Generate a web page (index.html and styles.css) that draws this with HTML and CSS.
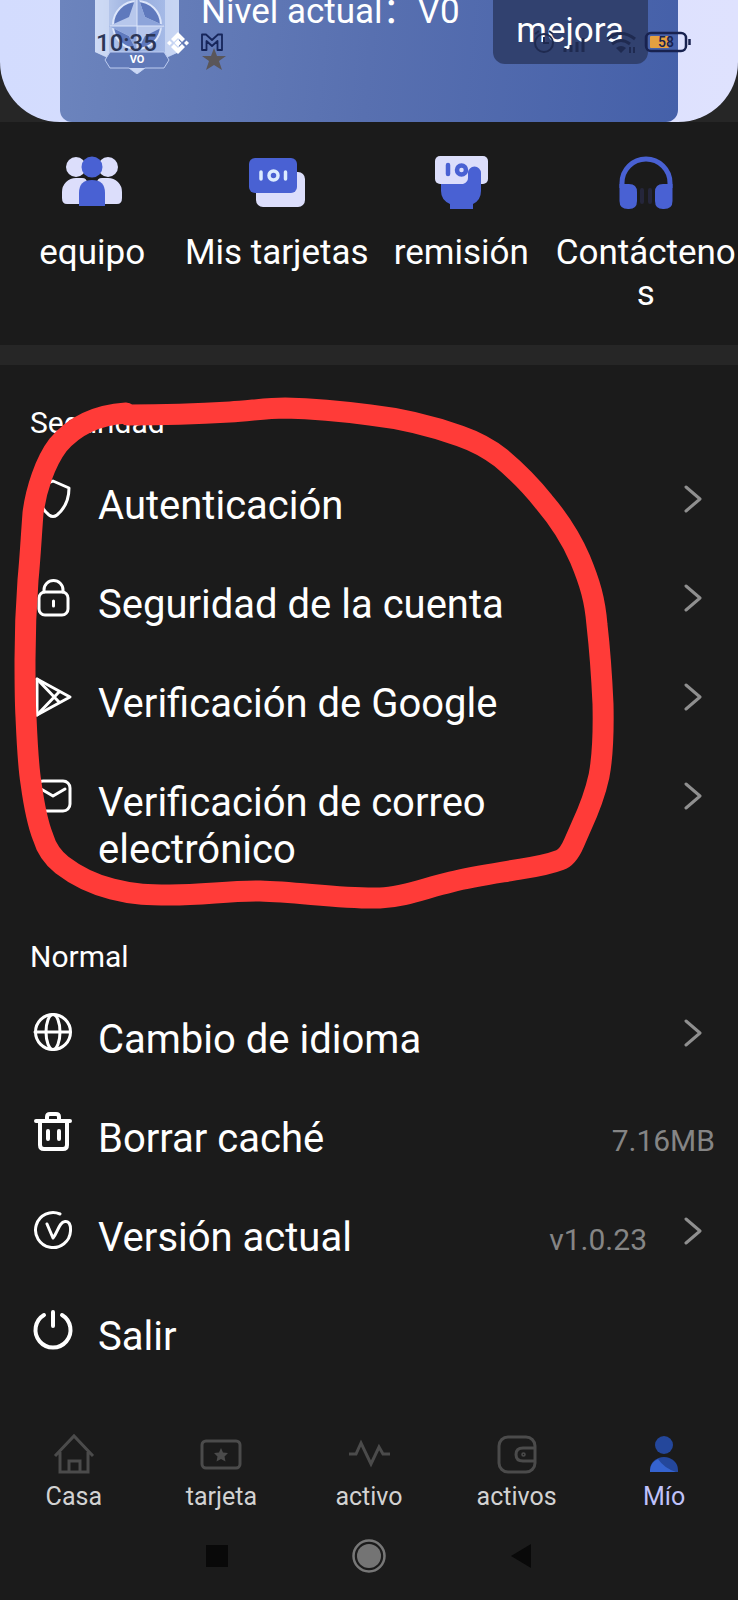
FILE: index.html
```html
<!DOCTYPE html>
<html lang="es">
<head>
<meta charset="utf-8">
<meta name="viewport" content="width=device-width, initial-scale=1">
<title>Mío</title>
<link rel="stylesheet" href="styles.css">
</head>
<body>
<div class="statusbar">
  <span class="clock">10:35</span>
  <svg class="status-left" viewBox="0 0 58 44" aria-hidden="true">
    <g fill="#fff">
      <path d="M11 6l7 7-3 3-4-4-4 4-3-3z"/>
      <path d="M11 28l7-7-3-3-4 4-4-4-3 3z"/>
      <path d="M11 13.500l3.500 3.500-3.500 3.500-3.500-3.500z"/>
      <path d="M2.500 14.500l2.500 2.500-2.500 2.500-2.500-2.500z"/>
      <path d="M19.500 14.500l2.500 2.500-2.500 2.500-2.500-2.500z"/>
    </g>
    <path d="M35 24V8.500h4l6 5.500 6-5.500h4V24h-4.500V15l-5.500 5-5.500-5v9z" fill="none" stroke="#16255a" stroke-width="1.800" stroke-linejoin="round"/>
    <path d="M47 22l3 8h9l-7 5 3 9-8-5-8 5 3-9-7-5h9z" fill="#5a5659"/>
  </svg>
  <svg class="status-right" viewBox="0 0 160 30" aria-hidden="true">
    <g fill="none" stroke="#1f2a50" stroke-width="2">
      <circle cx="13" cy="17" r="9"/>
      <path d="M13 11v6h5M4 8l4-3M22 8l-4-3"/>
      <path d="M34 26v-4M40 26v-7M46 26v-10M52 26V12" stroke-width="3"/>
      <path d="M76 13q14-11 28 0M81 18q9-7 18 0" stroke-width="3"/>
      <path d="M99 21v6M103 21v6"/>
    </g>
    <path d="M85 22q5-4 10 0l-5 5z" fill="#1f2a50"/>
    <rect x="115" y="7" width="40" height="18" rx="5" fill="none" stroke="#18224f" stroke-width="2.500"/>
    <rect x="119" y="10" width="19" height="12" rx="1" fill="#e5a040"/>
    <path d="M158.500 13v6" stroke="#18224f" stroke-width="2.500"/>
    <text x="135" y="21" text-anchor="middle" class="battery-text">58</text>
  </svg>
</div>

<header class="hero">
  <div class="level-card">
    <svg class="badge" viewBox="0 0 86 86" aria-hidden="true">
      <defs>
        <linearGradient id="hex" x1="0" x2="1"><stop offset="0" stop-color="#c3d2f1"/><stop offset=".5" stop-color="#96acdc"/><stop offset="1" stop-color="#adc1ec"/></linearGradient>
      </defs>
      <path d="M0 8l42-16 42 16v56l-42 20-42-20z" fill="url(#hex)"/>
      <path d="M14 8L0 12v52l14 6zM70 8l14 4v52l-14 6z" fill="#d3def6" opacity=".7"/>
      <circle cx="42" cy="37" r="24" fill="#5f79bd" stroke="#dde6fa" stroke-width="2"/>
      <path d="M42 6l8 23 20 9-20 10-8 16-8-16-20-10 20-9z" fill="#b7c7ec"/>
      <path d="M42 6v32h28l-20-9zM42 38v26l-8-16-20-10z" fill="#8da4da"/>
      <path d="M15 38h54M42 10v50" stroke="#dce5fa" stroke-width="1"/>
      <path d="M15 64h54l5 8-5 8H50l-8 6-8-6H15l-5-8z" fill="#6079b8" stroke="#bdccf0" stroke-width="1"/>
      <path d="M34 80h16l-8 6z" fill="#cbd8f5"/>
      <text x="42" y="75" text-anchor="middle" class="badge-text">VO</text>
    </svg>
    <p class="level">Nivel actual：V0</p>
    <button class="upgrade" type="button">mejora</button>
  </div>
</header>

<nav class="shortcuts">
  <a href="#equipo">
    <svg viewBox="0 0 60 54" aria-hidden="true">
      <g fill="#dcdefb"><circle cx="14" cy="11" r="10"/><circle cx="46" cy="11" r="10"/>
      <path d="M0 42V36a14 14 0 0 1 14-14h6q5 0 5 5v21H5q-5 0-5-6zM60 42V36a14 14 0 0 0-14-14h-6q-5 0-5 5v21h20q5 0 5-6z"/></g>
      <circle cx="30" cy="11" r="10.500" fill="#4961d3"/>
      <path d="M17 50V37q0-13 13-13t13 13v13z" fill="#4961d3"/>
    </svg>
    <span>equipo</span>
  </a>
  <a href="#tarjetas">
    <svg viewBox="0 0 60 54" aria-hidden="true">
      <rect x="9" y="16" width="49" height="35" rx="7" fill="#dcdefb"/>
      <rect x="2" y="2" width="48" height="35" rx="6" fill="#4961d3"/>
      <path d="M14 16v7M38.500 16v7" stroke="#dcecff" stroke-width="3.500" stroke-linecap="round"/>
      <circle cx="26.500" cy="19.500" r="4.500" fill="none" stroke="#dcecff" stroke-width="3.500"/>
    </svg>
    <span>Mis tarjetas</span>
  </a>
  <a href="#remision">
    <svg viewBox="0 0 60 54" aria-hidden="true">
      <rect x="4" y="0" width="53" height="28" rx="5" fill="#dcdefb"/>
      <path d="M17 9v9" stroke="#4961d3" stroke-width="4.500" stroke-linecap="round"/>
      <circle cx="30.500" cy="14" r="4.500" fill="none" stroke="#4961d3" stroke-width="4.500"/>
      <path d="M10 28h22q5-2 5-6v-5a6.500 6.500 0 0 1 13 0v18q0 9-8 13v5H19v-5q-9-4-9-13z" fill="#4961d3"/>
    </svg>
    <span>remisión</span>
  </a>
  <a href="#contacto">
    <svg viewBox="0 0 60 54" aria-hidden="true">
      <path d="M6 32v-5a24 24 0 0 1 48 0v5" fill="none" stroke="#4961d3" stroke-width="5"/>
      <path d="M3.500 28H13q8 0 8 8v9q0 8-8 8h-1q-8.500 0-8.500-8zM56.500 28H47q-8 0-8 8v9q0 8 8 8h1q8.500 0 8.500-8z" fill="#4961d3"/>
      <path d="M26 34v12M34 34v12" stroke="#25263b" stroke-width="4" stroke-linecap="round"/>
    </svg>
    <span>Contáctenos</span>
  </a>
</nav>

<main class="settings">
  <section>
    <h2>Seguridad</h2>
    <ul>
      <li><a class="row" href="#autenticacion">
        <svg class="icon" viewBox="0 0 42 42" aria-hidden="true"><path d="M21 3L37 10q0 17-12 27-4 3-8 0Q5 27 5 10z"/></svg>
        <span class="label">Autenticación</span>
        <svg class="chevron" viewBox="0 0 18 42" aria-hidden="true"><path d="M2 9l14 12L2 33"/></svg>
      </a></li>
      <li><a class="row" href="#cuenta">
        <svg class="icon" viewBox="0 0 42 42" aria-hidden="true"><rect x="7" y="15" width="29" height="23" rx="6"/><path d="M12 15v-2a9.500 9.500 0 0 1 19 0v2"/><path d="M21.500 24v5"/></svg>
        <span class="label">Seguridad de la cuenta</span>
        <svg class="chevron" viewBox="0 0 18 42" aria-hidden="true"><path d="M2 9l14 12L2 33"/></svg>
      </a></li>
      <li><a class="row" href="#google">
        <svg class="icon" viewBox="0 0 42 42" aria-hidden="true"><path d="M5 3l33 18L5 39z"/><path d="M5 3l22 23M5 39l22-23"/></svg>
        <span class="label">Verificación de Google</span>
        <svg class="chevron" viewBox="0 0 18 42" aria-hidden="true"><path d="M2 9l14 12L2 33"/></svg>
      </a></li>
      <li><a class="row" href="#correo">
        <svg class="icon" viewBox="0 0 42 42" aria-hidden="true"><rect x="4" y="6" width="34" height="30" rx="7"/><path d="M9 14l12 7 12-7"/></svg>
        <span class="label">Verificación de correo electrónico</span>
        <svg class="chevron" viewBox="0 0 18 42" aria-hidden="true"><path d="M2 9l14 12L2 33"/></svg>
      </a></li>
    </ul>
  </section>

  <section>
    <h2>Normal</h2>
    <ul>
      <li><a class="row" href="#idioma">
        <svg class="icon" viewBox="0 0 42 42" aria-hidden="true"><circle cx="21" cy="20" r="17.500"/><path d="M3 20h35"/><ellipse cx="21" cy="20" rx="7" ry="17.500"/></svg>
        <span class="label">Cambio de idioma</span>
        <svg class="chevron" viewBox="0 0 18 42" aria-hidden="true"><path d="M2 9l14 12L2 33"/></svg>
      </a></li>
      <li><button class="row row-end" type="button">
        <svg class="icon bold" viewBox="0 0 42 42" aria-hidden="true"><path d="M4 10h34M8 10v24q0 4 4 4h19q4 0 4-4V10M15 10V6q0-3 3-3h6q3 0 3 3v4M16 20v8M27 20v8"/></svg>
        <span class="label">Borrar caché</span>
        <span class="value">7.16MB</span>
      </button></li>
      <li><a class="row" href="#version">
        <svg class="icon" viewBox="0 0 42 42" aria-hidden="true"><path d="M28 4A17.500 17.500 0 1 0 38.500 21Q39 11 33 11.500C27 12 26 22 21 28L15 14"/></svg>
        <span class="label">Versión actual</span>
        <span class="value">v1.0.23</span>
        <svg class="chevron" viewBox="0 0 18 42" aria-hidden="true"><path d="M2 9l14 12L2 33"/></svg>
      </a></li>
      <li><button class="row" type="button">
        <svg class="icon bold" viewBox="0 0 42 42" aria-hidden="true"><path d="M12 6A17.500 17.500 0 1 0 30 6M21 3v14"/></svg>
        <span class="label">Salir</span>
      </button></li>
    </ul>
  </section>
</main>

<nav class="tabs">
  <a href="#casa"><svg viewBox="0 0 42 42" aria-hidden="true"><path d="M2 23L21 3l19 20M7 19v20h28V19M16 39V28h11v11"/></svg><span>Casa</span></a>
  <a href="#tarjeta"><svg viewBox="0 0 42 42" aria-hidden="true"><rect x="2" y="8" width="38" height="27" rx="4"/><path d="M21 15l2 4.500 5 .5-3.500 3.500 1 5-4.500-2.500-4.500 2.500 1-5L14 20l5-.5z" fill="#4b4b4b" stroke="none"/></svg><span>tarjeta</span></a>
  <a href="#activo"><svg viewBox="0 0 42 42" aria-hidden="true"><path d="M1 21h7l5-11 10 21 8-17 4 7h7"/></svg><span>activo</span></a>
  <a href="#activos"><svg viewBox="0 0 42 42" aria-hidden="true"><rect x="3" y="4" width="36" height="35" rx="9"/><path d="M38 15H27q-7 0-7 6.500t7 6.500h11"/><circle cx="27.500" cy="21.500" r=".8"/></svg><span>activos</span></a>
  <a class="active" href="#mio" aria-current="page"><svg viewBox="0 0 42 42" aria-hidden="true"><g stroke="none"><circle cx="21" cy="12" r="9" fill="#24479b"/><path d="M7 39V37a14 13 0 0 1 28 0v2z" fill="#24479b"/><path d="M7 39V37a14 13 0 0 1 8-11q6 9 18 13z" fill="#3563cf"/></g></svg><span>Mío</span></a>
</nav>

<div class="system-nav">
  <button type="button" aria-label="Recientes"><svg viewBox="0 0 36 36" aria-hidden="true"><rect x="7" y="7" width="22" height="22" fill="#090909"/></svg></button>
  <button type="button" aria-label="Inicio"><svg viewBox="0 0 36 36" aria-hidden="true"><circle cx="18" cy="18" r="15.500" fill="none" stroke="#777" stroke-width="2.500"/><circle cx="18" cy="18" r="12" fill="#747474"/></svg></button>
  <button type="button" aria-label="Atrás"><svg viewBox="0 0 36 36" aria-hidden="true"><path d="M8 18L28 6v24z" fill="#090909"/></svg></button>
</div>

<svg class="marker" viewBox="0 0 738 1600" aria-hidden="true">
  <path d="M126 413C95 415 74 426 58 445C45 462 36 490 33 513C31 540 30 560 28 580Q25 620 25 660C25 680 25 700 26 717C27 740 28 765 31 783C34 805 37 822 43 837Q48 854 62 865C75 875 92 884 112 889C135 895 150 895 170 895C205 895 225 891 260 891C300 892 340 899 380 898C405 897 425 888 451 882C475 876 498 873 521 869Q547 865 560 860Q568 857 574 843L581 827Q594 799 599 776Q604 750 603 704Q601 660 597 625C595 600 590 583 580 559Q567 529 544 502Q526 479 501 458Q483 444 460 436Q415 420 370 415Q325 409 285 408C265 408 250 411 230 412Q180 415 128 415"/>
</svg>
</body>
</html>
```
FILE: styles.css
```css
* {
  box-sizing: border-box;
}

body {
  position: relative;
  display: flex;
  flex-direction: column;
  min-height: 100vh;
  margin: 0;
  overflow-x: hidden;
  background: #1b1b1b;
  color: #fff;
  font-family: Roboto, "Noto Sans CJK SC", sans-serif;
}

a {
  color: inherit;
  text-decoration: none;
}

button {
  border: 0;
  background: none;
  color: inherit;
  font: inherit;
  text-align: left;
}

svg {
  display: block;
  flex: none;
}

/* Device status bar, drawn over the page */
.statusbar {
  position: absolute;
  top: 26px;
  left: 0;
  right: 0;
  z-index: 1;
  display: flex;
  align-items: flex-start;
  gap: 10px;
  padding: 0 47px 0 96px;
}

.clock {
  padding-top: 3px;
  color: #2b3657;
  font-size: 24px;
  font-weight: 500;
  line-height: 28px;
}

.status-left {
  width: 58px;
  height: 44px;
  overflow: visible;
}

.status-right {
  width: 160px;
  height: 30px;
  margin-left: auto;
}

.battery-text {
  fill: #18224f;
  font-size: 14px;
  font-weight: 500;
}

/* Level card */
.hero {
  border-radius: 0 0 60px 60px;
  background: linear-gradient(90deg, #d3dcfe, #dfe2fe);
  box-shadow: 0 0 0 60px #262626;
  clip-path: inset(0);
}

.level-card {
  display: flex;
  align-items: flex-start;
  gap: 20px;
  margin: 0 60px;
  padding: 0 30px 48px 35px;
  border-radius: 0 0 12px 12px;
  background: linear-gradient(95deg, #6c84bd, #5870b0 50%, #4560a9);
}

.badge {
  width: 86px;
  height: 86px;
  margin-top: -12px;
}

.badge-text {
  fill: #fff;
  font-size: 11px;
  font-weight: 700;
}

.level {
  margin: -9px 0 0;
  font-size: 35px;
  line-height: 41px;
  white-space: nowrap;
}

.upgrade {
  margin: -12px 0 0 auto;
  padding: 22px 24px 13px 23px;
  border-radius: 12px;
  background: #31416f;
  font-size: 35px;
  line-height: 41px;
}

/* Shortcuts */
.shortcuts {
  display: grid;
  grid-template-columns: repeat(4, 1fr);
  padding: 34px 0 31px;
  border-bottom: 20px solid #262626;
  font-size: 35px;
  line-height: 41px;
}

.shortcuts a {
  display: flex;
  flex-direction: column;
  align-items: center;
  gap: 22px;
  min-width: 0;
  text-align: center;
}

.shortcuts span {
  max-width: 100%;
  overflow-wrap: anywhere;
}

.shortcuts svg {
  width: 60px;
  height: 54px;
}

/* Settings lists */
.settings {
  flex: 1;
}

.settings section {
  padding-top: 40px;
}

.settings h2 {
  margin: 0;
  padding: 0 30px 15px;
  font-size: 30px;
  font-weight: 400;
  line-height: 36px;
}

.settings ul {
  margin: 0;
  padding: 0;
  list-style: none;
}

.row {
  display: flex;
  align-items: flex-start;
  width: 100%;
  padding: 22px 36px 26px 32px;
}

.row-end {
  padding-right: 23px;
}

.icon {
  width: 42px;
  height: 42px;
  margin-right: 24px;
  fill: none;
  stroke: #fff;
  stroke-width: 3;
  stroke-linecap: round;
  stroke-linejoin: round;
}

.icon.bold {
  stroke-width: 4;
}

.label {
  flex: 1;
  max-width: 480px;
  padding-top: 4px;
  font-size: 40px;
  line-height: 47px;
}

.value {
  margin-left: auto;
  padding-top: 12px;
  color: #858585;
  font-size: 30px;
  line-height: 35px;
}

.chevron {
  width: 18px;
  height: 42px;
  margin-left: auto;
  fill: none;
  stroke: #8f8f8f;
  stroke-width: 3;
  stroke-linecap: round;
  stroke-linejoin: round;
}

.value + .chevron {
  margin-left: 37px;
}

/* Bottom tabs */
.tabs {
  display: grid;
  grid-template-columns: repeat(5, 1fr);
  padding-bottom: 26px;
  color: #d2d2d2;
  font-size: 25px;
  line-height: 30px;
}

.tabs a {
  display: flex;
  flex-direction: column;
  align-items: center;
  gap: 7px;
}

.tabs svg {
  width: 42px;
  height: 42px;
  fill: none;
  stroke: #4b4b4b;
  stroke-width: 3;
}

.tabs .active {
  color: #bfc2fb;
}

/* Device navigation keys */
.system-nav {
  display: flex;
  justify-content: space-between;
  padding: 0 27% 26px;
}

.system-nav button {
  padding: 0;
}

.system-nav svg {
  width: 36px;
  height: 36px;
}

/* Hand-drawn ring round the security list */
.marker {
  position: absolute;
  top: 0;
  left: 0;
  width: 738px;
  height: 1600px;
  pointer-events: none;
  fill: none;
  stroke: #ff3b38;
  stroke-width: 21;
  stroke-linecap: round;
  stroke-linejoin: round;
}
```
